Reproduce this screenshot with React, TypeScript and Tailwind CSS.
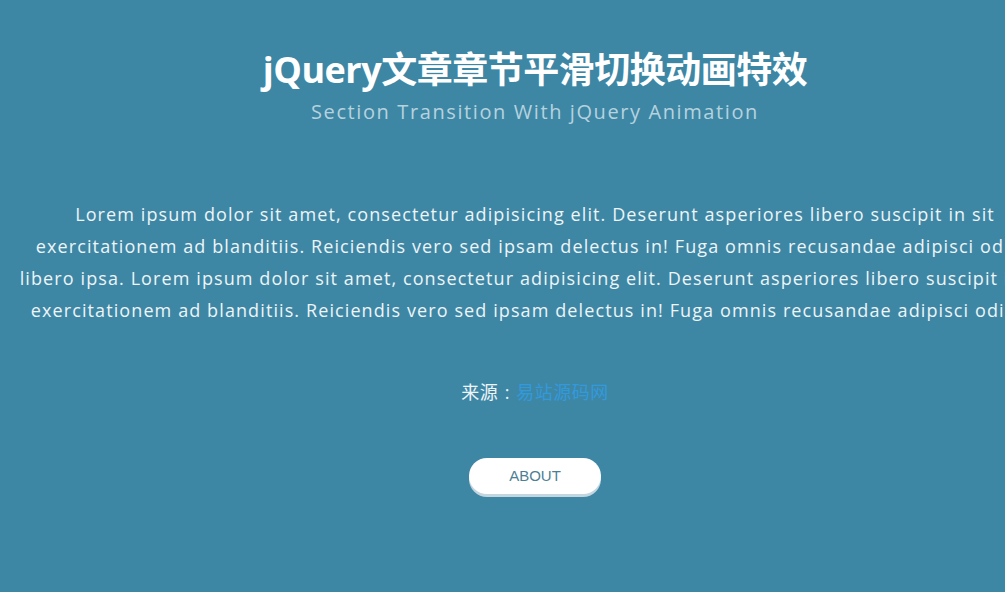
import React from "react";

const lines = [
  "Lorem ipsum dolor sit amet, consectetur adipisicing elit. Deserunt asperiores libero suscipit in sit",
  "exercitationem ad blanditiis. Reiciendis vero sed ipsam delectus in! Fuga omnis recusandae adipisci odit a",
  "libero ipsa. Lorem ipsum dolor sit amet, consectetur adipisicing elit. Deserunt asperiores libero suscipit in sit",
  "exercitationem ad blanditiis. Reiciendis vero sed ipsam delectus in! Fuga omnis recusandae adipisci odio, a",
];

const App = () => {
  return (
    <div
      className="w-full h-[592px] overflow-hidden bg-[#3d87a5]"
      style={{ fontFamily: '"Open Sans", "Noto Sans CJK SC", sans-serif' }}
    >
      <div className="w-[1070px] flex flex-col items-center">
        <header className="pt-[45px] flex flex-col items-center">
          <h1 className="text-[36px] leading-[50px] font-bold text-white tracking-[-0.5px]">
            jQuery文章章节平滑切换动画特效
          </h1>
          <h2 className="text-[20px] leading-[28px] text-[#b7d2df] tracking-[1.6px] mt-[3px]">
            Section Transition With jQuery Animation
          </h2>
        </header>

        <section className="mt-[72px] w-full text-center text-[18px] leading-[32px] tracking-[1.1px] text-[#eef4f7] whitespace-nowrap">
          {lines.map((line, i) => (
            <p key={i}>{line}</p>
          ))}
        </section>

        <p className="mt-[52px] text-[18px] leading-[28px] text-[#eef4f7] tracking-[0.5px]">
          来源<span className="inline-block w-[18px] text-center">:</span>
          <a href="#" className="text-[#3399dd]">易站源码网</a>
        </p>

        <button
          className="mt-[52px] w-[132px] h-[36px] rounded-full bg-white text-[15px] text-[#4d7f94] shadow-[0_3px_0_#c3d6df]"
          style={{ fontFamily: '"Liberation Sans", Arial, sans-serif' }}
        >
          ABOUT
        </button>
      </div>
    </div>
  );
};

export default App;
